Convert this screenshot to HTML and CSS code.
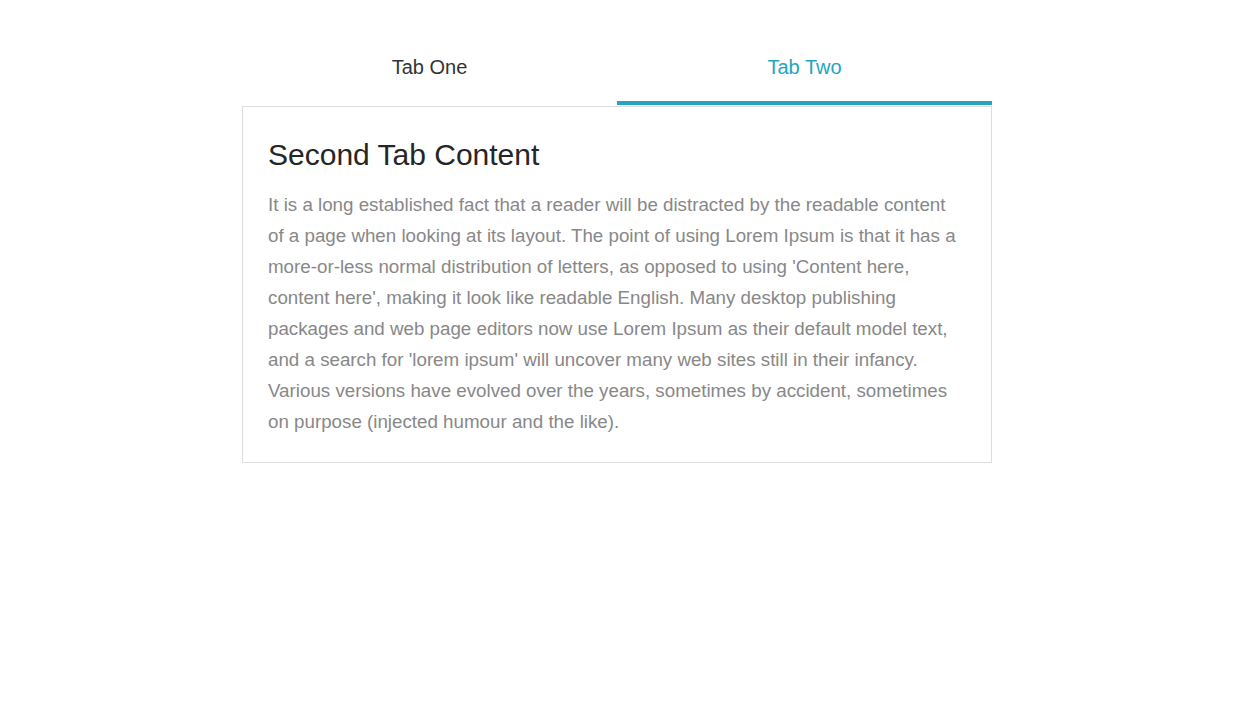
FILE: index.html
```html
<!DOCTYPE html>
<html>
<head>
<meta charset="utf-8">
<link rel="stylesheet" href="styles.css">
</head>
<body>
<div class="page">
  <div class="tabs">
    <div class="tab-bar">
      <div class="tab">Tab One</div>
      <div class="tab active">Tab Two</div>
    </div>
    <div class="panel">
      <h2 class="panel-title">Second Tab Content</h2>
      <p class="panel-text">It is a long established fact that a reader will be distracted by the readable content of a page when looking at its layout. The point of using Lorem Ipsum is that it has a more-or-less normal distribution of letters, as opposed to using 'Content here, content here', making it look like readable English. Many desktop publishing packages and web page editors now use Lorem Ipsum as their default model text, and a search for 'lorem ipsum' will uncover many web sites still in their infancy. Various versions have evolved over the years, sometimes by accident, sometimes on purpose (injected humour and the like).</p>
    </div>
  </div>
</div>
</body>
</html>
```

FILE: styles.css
```css
html, body {
  margin: 0;
  padding: 0;
  background: #fff;
}
body {
  font-family: "Liberation Sans", Arial, sans-serif;
}
.page {
  padding: 40px 0 0 242px;
}
.tabs {
  width: 750px;
}
.tab-bar {
  display: flex;
}
.tab {
  flex: 1;
  text-align: center;
  font-size: 20px;
  color: #333;
  height: 61px;
  line-height: 54px;
  border-bottom: 4px solid transparent;
  box-sizing: content-box;
}
.tab.active {
  color: #1fa6c0;
  border-bottom-color: #26a3bd;
}
.panel {
  margin-top: 1px;
  border: 1px solid #dedede;
  padding: 30px 30px 25px 25px;
}
.panel-title {
  margin: 0;
  font-weight: normal;
  font-size: 30px;
  line-height: 48px;
  color: #262626;
  margin-top: -6px;
}
.panel-text {
  margin: 10px 0 0 0;
  font-size: 18.75px;
  line-height: 31px;
  color: #888;
}
```
